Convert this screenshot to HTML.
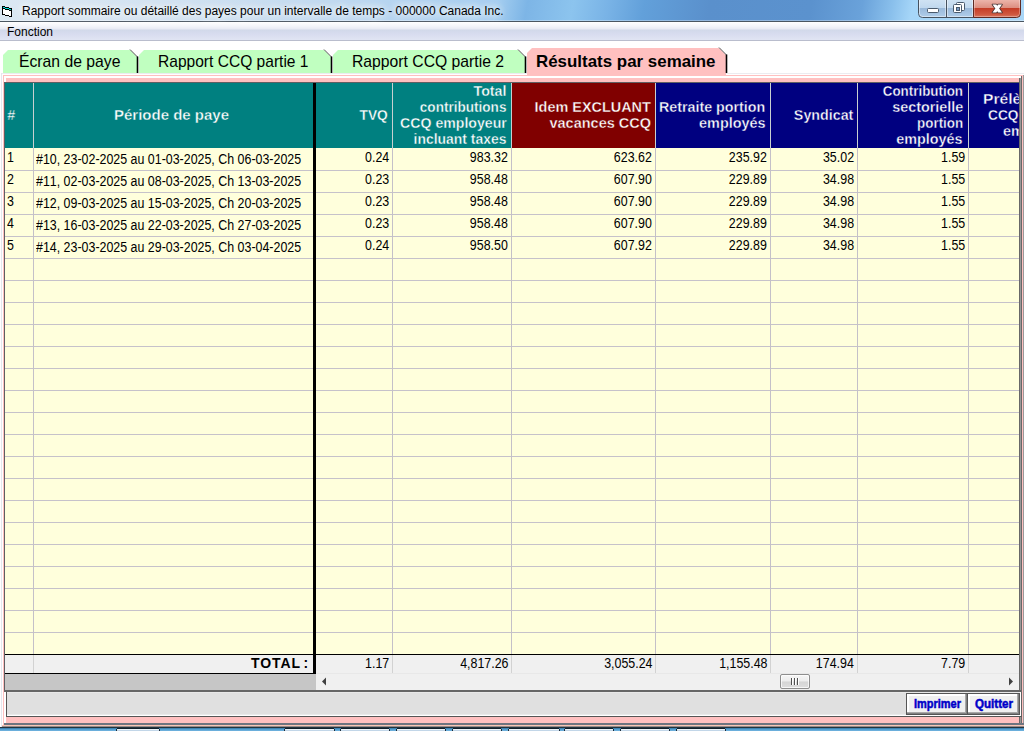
<!DOCTYPE html><html><head><meta charset='utf-8'><title>Rapport</title><style>
html,body{margin:0;padding:0}
body{width:1024px;height:731px;position:relative;overflow:hidden;background:#fff;font-family:"Liberation Sans",sans-serif;}
.a{position:absolute}
.t{position:absolute;white-space:nowrap;line-height:1}
#titlebar{left:0;top:0;width:1024px;height:21px;background:
 linear-gradient(100deg,#dbe8f3 0px,#d3e3f1 150px,#c4dbf0 300px,#b0d2f0 420px,#a4cef0 490px,#7db5e6 520px,#8cc4ee 565px,#79b3e6 600px,#62a0da 635px,#5a90cc 700px,#5b92ce 800px,#6aa2da 850px,#8ac0ec 880px,#a6d6f8 900px,#a9d6f7 1024px);}
#tline{left:0;top:21px;width:1024px;height:1px;background:#4b5661}
#thl{left:0;top:20px;width:1024px;height:1px;background:rgba(255,255,255,.35)}
#menubar{left:0;top:22px;width:1024px;height:18px;background:linear-gradient(to bottom,#ffffff 0px,#f4f5fa 4px,#e8eaf4 7px,#d2d9ea 8px,#d8dcef 12px,#e1e5f3 18px)}
#mline{left:0;top:40px;width:1024px;height:1px;background:#b9bdcd}
.tab{position:absolute;background:#c0ffc0;top:50px;height:23px}
.tabtxt{position:absolute;white-space:nowrap;font-size:17px;line-height:1;color:#000;transform-origin:0 0}
.hdr{position:absolute;top:82px;height:66px}
.ht{position:absolute;color:#fff;font-weight:bold;font-size:14px;line-height:16px;text-align:right;white-space:nowrap}
.vl{position:absolute;width:1px;background:#c4c0c8}
.hl{position:absolute;height:1px;background:#c6c2ca;left:4px;width:1015px}
.num{font-kerning:none;position:absolute;font-size:14px;line-height:1;white-space:nowrap;text-align:right;transform-origin:100% 0;color:#000}
.txt{font-kerning:none;position:absolute;font-size:14px;line-height:1;white-space:nowrap;transform-origin:0 0;color:#000}
.btn{position:absolute;top:693px;height:22px;box-sizing:border-box;background:#f0f0f0;border:1px solid #555;box-shadow:inset -1px -1px 0 #808080,inset -2px -2px 0 #a8a8a8,inset 2px 2px 0 #fff}
.btxt{position:absolute;font-weight:bold;font-size:12.5px;color:#0000c8;-webkit-text-stroke:.5px #0000c8;line-height:1;white-space:nowrap;transform-origin:0 0}
</style></head><body>
<div id='titlebar' class='a'></div><div id='thl' class='a'></div><div id='tline' class='a'></div>
<svg class='a' style='left:0;top:0' width='16' height='20' viewBox='0 0 16 20' shape-rendering='crispEdges'><rect x='2' y='6' width='3' height='1' fill='#000'/><rect x='2' y='7' width='1' height='1' fill='#000'/><rect x='3' y='7' width='2' height='1' fill='#00e0d8'/><rect x='5' y='7' width='4' height='1' fill='#000'/><rect x='2' y='8' width='3' height='1' fill='#000'/><rect x='5' y='8' width='4' height='1' fill='#00e0d8'/><rect x='9' y='8' width='3' height='1' fill='#000'/><rect x='2' y='9' width='1' height='1' fill='#000'/><rect x='3' y='9' width='2' height='1' fill='#fff'/><rect x='5' y='9' width='4' height='1' fill='#000'/><rect x='9' y='9' width='2' height='1' fill='#00e0d8'/><rect x='11' y='9' width='1' height='1' fill='#000'/><rect x='2' y='10' width='1' height='1' fill='#000'/><rect x='3' y='10' width='6' height='1' fill='#fff'/><rect x='9' y='10' width='3' height='1' fill='#000'/><rect x='2' y='11' width='1' height='1' fill='#000'/><rect x='3' y='11' width='8' height='1' fill='#fff'/><rect x='11' y='11' width='1' height='1' fill='#000'/><rect x='2' y='12' width='1' height='1' fill='#000'/><rect x='3' y='12' width='8' height='1' fill='#fff'/><rect x='11' y='12' width='1' height='1' fill='#000'/><rect x='2' y='13' width='1' height='1' fill='#000'/><rect x='3' y='13' width='8' height='1' fill='#fff'/><rect x='11' y='13' width='1' height='1' fill='#000'/><rect x='2' y='14' width='3' height='1' fill='#000'/><rect x='5' y='14' width='6' height='1' fill='#fff'/><rect x='11' y='14' width='1' height='1' fill='#000'/><rect x='5' y='15' width='4' height='1' fill='#000'/><rect x='9' y='15' width='2' height='1' fill='#fff'/><rect x='11' y='15' width='1' height='1' fill='#000'/><rect x='9' y='16' width='3' height='1' fill='#000'/></svg>
<div class='t' style='left:22px;top:5px;font-size:12px;color:#000;text-shadow:0 0 6px #fff,0 0 10px #fff,0 0 14px rgba(255,255,255,.8)'>Rapport sommaire ou détaillé des payes pour un intervalle de temps - 000000 Canada Inc.</div>
<svg class='a' style='left:918px;top:0' width='106' height='19' viewBox='0 0 106 19'>
<defs>
<linearGradient id='gb' x1='0' y1='0' x2='0' y2='18' gradientUnits='userSpaceOnUse'><stop offset='0' stop-color='#cfe2f3'/><stop offset='.44' stop-color='#c0d8ee'/><stop offset='.45' stop-color='#9ab9da'/><stop offset='1' stop-color='#b2cfea'/></linearGradient>
<linearGradient id='gr' x1='0' y1='0' x2='0' y2='18' gradientUnits='userSpaceOnUse'><stop offset='0' stop-color='#ecb4aa'/><stop offset='.44' stop-color='#dc8e80'/><stop offset='.45' stop-color='#c43c26'/><stop offset='.8' stop-color='#cf5840'/><stop offset='1' stop-color='#dc826c'/></linearGradient>
</defs>
<path d='M0.5 -1V13.5Q0.5 17.5 4.5 17.5H55.500V-1z' fill='url(#gb)' stroke='#46525f'/>
<path d='M55.500 -1V17.5H98.500Q102.500 17.5 102.500 13.5V-1z' fill='url(#gr)' stroke='#5e2a24'/>
<path d='M28.500 0V17' stroke='#46525f'/>
<path d='M1.500 0V13.500Q1.500 16.500 4.500 16.500H27.500V0M29.500 0V16.500H54.500V0' fill='none' stroke='rgba(255,255,255,.45)'/>
<path d='M56.500 0V16.500H98.500Q101.500 16.500 101.500 13.500V0' fill='none' stroke='rgba(255,255,255,.3)'/>
<rect x='9.500' y='8.500' width='11' height='4' rx='1' fill='#fff' stroke='#4a5a6c'/>
<rect x='38.500' y='2.500' width='8' height='8' rx='1' fill='#fff' stroke='#4a5a6c'/>
<rect x='35.500' y='4.500' width='8' height='8' rx='1' fill='#fff' stroke='#4a5a6c'/>
<rect x='38.500' y='7.500' width='3' height='3' fill='#7d9cc4' stroke='#4a5a6c'/>
<path d='M74.500 4.500H78.300L84 12.500H80.200zM80.200 4.500H84L78.300 12.500H74.500z' fill='#fff' stroke='#4a3434' stroke-width='1.600' stroke-linejoin='round'/>
<path d='M74.500 4.500H78.300L84 12.500H80.200zM80.200 4.500H84L78.300 12.500H74.500z' fill='#fff'/>
</svg>
<div id='menubar' class='a'></div><div id='mline' class='a'></div>
<div class='t' style='left:7px;top:26px;font-size:12px;color:#000'>Fonction</div>
<div class='a' style='left:2px;top:73px;width:1022px;height:1px;background:#ececf0'></div>
<div class='a' style='left:3px;top:75px;width:1020px;height:650px;background:#ffc0c0'></div>
<div class='a' style='left:4px;top:76px;width:1017px;height:2px;background:#fff'></div>
<div class='a' style='left:4px;top:76px;width:2px;height:647px;background:#fff'></div>
<div class='a' style='left:3px;top:50px;width:134px;height:23px;background:#c0ffc0;clip-path:polygon(0 5px,5px 0,127px 0,100% 7px,100% 100%,0 100%)'></div>
<svg class='a' style='left:128px;top:48px' width='12' height='25' viewBox='0 0 12 25'><path d='M2 1.500L9.500 9' stroke='#555' stroke-width='1' fill='none'/><path d='M9.500 8.500V25' stroke='#000' stroke-width='1.600'/></svg>
<div class='tabtxt' style='left:18.5px;top:53px;font-weight:normal;font-size:17px;transform:scaleX(0.9258)'>Écran de paye</div>
<div class='a' style='left:139px;top:50px;width:192px;height:23px;background:#c0ffc0;clip-path:polygon(0 5px,5px 0,185px 0,100% 7px,100% 100%,0 100%)'></div>
<svg class='a' style='left:322px;top:48px' width='12' height='25' viewBox='0 0 12 25'><path d='M2 1.500L9.500 9' stroke='#555' stroke-width='1' fill='none'/><path d='M9.500 8.500V25' stroke='#000' stroke-width='1.600'/></svg>
<div class='tabtxt' style='left:157.5px;top:53px;font-weight:normal;font-size:17px;transform:scaleX(0.9154)'>Rapport CCQ partie 1</div>
<div class='a' style='left:333px;top:50px;width:192px;height:23px;background:#c0ffc0;clip-path:polygon(0 5px,5px 0,185px 0,100% 7px,100% 100%,0 100%)'></div>
<svg class='a' style='left:516px;top:48px' width='12' height='25' viewBox='0 0 12 25'><path d='M2 1.500L9.500 9' stroke='#555' stroke-width='1' fill='none'/><path d='M9.500 8.500V25' stroke='#000' stroke-width='1.600'/></svg>
<div class='tabtxt' style='left:351.5px;top:53px;font-weight:normal;font-size:17px;transform:scaleX(0.9245)'>Rapport CCQ partie 2</div>
<div class='a' style='left:527px;top:48px;width:199px;height:28px;background:#ffc0c0;clip-path:polygon(0 5px,5px 0,192px 0,100% 7px,100% 100%,0 100%)'></div>
<svg class='a' style='left:717px;top:46px' width='12' height='27' viewBox='0 0 12 27'><path d='M2 1.500L9.500 9' stroke='#555' stroke-width='1' fill='none'/><path d='M9.500 8.500V27' stroke='#000' stroke-width='1.600'/></svg>
<div class='tabtxt' style='left:536px;top:53px;font-weight:bold;font-size:17px;transform:scaleX(0.9946)'>Résultats par semaine</div>
<div class='a' style='left:1px;top:73px;width:1px;height:655px;background:#e6e6ee'></div>
<div class='a' style='left:1019px;top:78px;width:1px;height:646px;background:#686868'></div>
<div class='a' style='left:1020px;top:78px;width:1px;height:646px;background:#9a9a9a'></div>
<div class='a' style='left:1021px;top:76px;width:1px;height:648px;background:#686868'></div>
<div class='a' style='left:1022px;top:75px;width:1px;height:650px;background:#ffc0c0'></div>
<div class='a' style='left:1023px;top:75px;width:1px;height:650px;background:#9a9a9a'></div>
<div class='a' style='left:4px;top:148px;width:1015px;height:506px;background:#ffffdc'></div>
<div class='hdr' style='left:4px;width:508px;background:#008080'></div>
<div class='hdr' style='left:512px;width:144px;background:#800000'></div>
<div class='hdr' style='left:656px;width:363px;background:#000080'></div>
<div class='a' style='left:4px;top:655px;width:1015px;height:18px;background:#f0f0f0'></div>
<div class='a' style='left:4px;top:674px;width:312px;height:16px;background:#c6c6c6'></div>
<div class='a' style='left:316px;top:673px;width:703px;height:17px;background:#f0f0f0'></div>
<div class='a' style='left:316px;top:673px;width:703px;height:1px;background:#e8e8e8'></div>
<div class='hl' style='top:170px'></div>
<div class='hl' style='top:192px'></div>
<div class='hl' style='top:214px'></div>
<div class='hl' style='top:236px'></div>
<div class='hl' style='top:258px'></div>
<div class='hl' style='top:280px'></div>
<div class='hl' style='top:302px'></div>
<div class='hl' style='top:324px'></div>
<div class='hl' style='top:346px'></div>
<div class='hl' style='top:368px'></div>
<div class='hl' style='top:390px'></div>
<div class='hl' style='top:412px'></div>
<div class='hl' style='top:434px'></div>
<div class='hl' style='top:456px'></div>
<div class='hl' style='top:478px'></div>
<div class='hl' style='top:500px'></div>
<div class='hl' style='top:522px'></div>
<div class='hl' style='top:544px'></div>
<div class='hl' style='top:566px'></div>
<div class='hl' style='top:588px'></div>
<div class='hl' style='top:610px'></div>
<div class='hl' style='top:632px'></div>
<div class='vl' style='left:33px;top:82px;height:66px;background:#c8d0d0'></div>
<div class='vl' style='left:33px;top:148px;height:506px'></div>
<div class='vl' style='left:33px;top:655px;height:18px;background:#d2d2d2'></div>
<div class='vl' style='left:392px;top:82px;height:66px;background:#c8d0d0'></div>
<div class='vl' style='left:392px;top:148px;height:506px'></div>
<div class='vl' style='left:392px;top:655px;height:18px;background:#d2d2d2'></div>
<div class='vl' style='left:511px;top:82px;height:66px;background:#c8d0d0'></div>
<div class='vl' style='left:511px;top:148px;height:506px'></div>
<div class='vl' style='left:511px;top:655px;height:18px;background:#d2d2d2'></div>
<div class='vl' style='left:655px;top:82px;height:66px;background:#c8d0d0'></div>
<div class='vl' style='left:655px;top:148px;height:506px'></div>
<div class='vl' style='left:655px;top:655px;height:18px;background:#d2d2d2'></div>
<div class='vl' style='left:770px;top:82px;height:66px;background:#c8d0d0'></div>
<div class='vl' style='left:770px;top:148px;height:506px'></div>
<div class='vl' style='left:770px;top:655px;height:18px;background:#d2d2d2'></div>
<div class='vl' style='left:857px;top:82px;height:66px;background:#c8d0d0'></div>
<div class='vl' style='left:857px;top:148px;height:506px'></div>
<div class='vl' style='left:857px;top:655px;height:18px;background:#d2d2d2'></div>
<div class='vl' style='left:968px;top:82px;height:66px;background:#c8d0d0'></div>
<div class='vl' style='left:968px;top:148px;height:506px'></div>
<div class='vl' style='left:968px;top:655px;height:18px;background:#d2d2d2'></div>
<div class='a' style='left:4px;top:654px;width:1015px;height:1px;background:#000'></div>
<div class='a' style='left:4px;top:673px;width:312px;height:1px;background:#000'></div>
<div class='a' style='left:313px;top:82px;width:3px;height:592px;background:#000'></div>
<div class='a' style='left:4px;top:82px;width:1015px;height:1px;background:#5f5f63'></div>
<div class='a' style='left:4px;top:82px;width:1px;height:608px;background:#5f5f63'></div>
<div class='ht' style='left:7px;transform-origin:0 0;top:107px;font-size:14px;transform:scaleX(1.0261);-webkit-text-stroke:.35px #008080;font-style:italic;'>#</div>
<div class='ht' style='left:114.3px;transform-origin:0 0;top:107px;font-size:14px;transform:scaleX(1.0709);-webkit-text-stroke:.35px #008080;'>Période de paye</div>
<div class='ht' style='right:636.4px;transform-origin:100% 0;top:107px;font-size:14px;transform:scaleX(0.9833);-webkit-text-stroke:.35px #008080;'>TVQ</div>
<div class='ht' style='right:517.6px;transform-origin:100% 0;top:83px;font-size:14px;transform:scaleX(1.0152);-webkit-text-stroke:.35px #008080;'>Total</div>
<div class='ht' style='right:517.6px;transform-origin:100% 0;top:99px;font-size:14px;transform:scaleX(0.9683);-webkit-text-stroke:.35px #008080;'>contributions</div>
<div class='ht' style='right:517.6px;transform-origin:100% 0;top:115px;font-size:14px;transform:scaleX(1.0084);-webkit-text-stroke:.35px #008080;'>CCQ employeur</div>
<div class='ht' style='right:517.6px;transform-origin:100% 0;top:131px;font-size:14px;transform:scaleX(0.9938);-webkit-text-stroke:.35px #008080;'>incluant taxes</div>
<div class='ht' style='right:373.4px;transform-origin:100% 0;top:99px;font-size:14px;transform:scaleX(1.0302);-webkit-text-stroke:.35px #800000;'>Idem EXCLUANT</div>
<div class='ht' style='right:373.4px;transform-origin:100% 0;top:115px;font-size:14px;transform:scaleX(1.0361);-webkit-text-stroke:.35px #800000;'>vacances CCQ</div>
<div class='ht' style='right:258.5px;transform-origin:100% 0;top:99px;font-size:14px;transform:scaleX(1.0198);-webkit-text-stroke:.35px #000080;'>Retraite portion</div>
<div class='ht' style='right:258.5px;transform-origin:100% 0;top:115px;font-size:14px;transform:scaleX(1.0295);-webkit-text-stroke:.35px #000080;'>employés</div>
<div class='ht' style='right:170.79999999999995px;transform-origin:100% 0;top:107px;font-size:14px;transform:scaleX(1.0195);-webkit-text-stroke:.35px #000080;'>Syndicat</div>
<div class='ht' style='right:61px;transform-origin:100% 0;top:83px;font-size:14px;transform:scaleX(0.9549);-webkit-text-stroke:.35px #000080;'>Contribution</div>
<div class='ht' style='right:61px;transform-origin:100% 0;top:99px;font-size:14px;transform:scaleX(1.0250);-webkit-text-stroke:.35px #000080;'>sectorielle</div>
<div class='ht' style='right:61px;transform-origin:100% 0;top:115px;font-size:14px;transform:scaleX(0.9581);-webkit-text-stroke:.35px #000080;'>portion</div>
<div class='ht' style='right:61px;transform-origin:100% 0;top:131px;font-size:14px;transform:scaleX(1.0264);-webkit-text-stroke:.35px #000080;'>employés</div>
<div class='a' style='left:969px;top:82px;width:50px;height:66px;overflow:hidden'>
<div class='ht' style='left:14.399999999999977px;top:9px;transform-origin:0 0;transform:scaleX(1.1167);-webkit-text-stroke:.35px #000080'>Prélèvement</div>
<div class='ht' style='left:18.600000000000023px;top:25px;transform-origin:0 0;transform:scaleX(0.9793);-webkit-text-stroke:.35px #000080'>CCQ portion</div>
<div class='ht' style='left:34px;top:41px;transform-origin:0 0;transform:scaleX(1.0264);-webkit-text-stroke:.35px #000080'>employés</div>
</div>
<div class='txt' style='left:7px;top:150px;transform:scaleX(0.887)'>1</div>
<div class='txt' style='left:36px;top:152px;transform:scaleX(0.887)'>#10, 23-02-2025 au 01-03-2025, Ch 06-03-2025</div>
<div class='num' style='right:635px;top:150px;transform:scaleX(0.887)'>0.24</div>
<div class='num' style='right:516px;top:150px;transform:scaleX(0.887)'>983.32</div>
<div class='num' style='right:372px;top:150px;transform:scaleX(0.887)'>623.62</div>
<div class='num' style='right:257px;top:150px;transform:scaleX(0.887)'>235.92</div>
<div class='num' style='right:170px;top:150px;transform:scaleX(0.887)'>35.02</div>
<div class='num' style='right:59px;top:150px;transform:scaleX(0.887)'>1.59</div>
<div class='txt' style='left:7px;top:172px;transform:scaleX(0.887)'>2</div>
<div class='txt' style='left:36px;top:174px;transform:scaleX(0.887)'>#11, 02-03-2025 au 08-03-2025, Ch 13-03-2025</div>
<div class='num' style='right:635px;top:172px;transform:scaleX(0.887)'>0.23</div>
<div class='num' style='right:516px;top:172px;transform:scaleX(0.887)'>958.48</div>
<div class='num' style='right:372px;top:172px;transform:scaleX(0.887)'>607.90</div>
<div class='num' style='right:257px;top:172px;transform:scaleX(0.887)'>229.89</div>
<div class='num' style='right:170px;top:172px;transform:scaleX(0.887)'>34.98</div>
<div class='num' style='right:59px;top:172px;transform:scaleX(0.887)'>1.55</div>
<div class='txt' style='left:7px;top:194px;transform:scaleX(0.887)'>3</div>
<div class='txt' style='left:36px;top:196px;transform:scaleX(0.887)'>#12, 09-03-2025 au 15-03-2025, Ch 20-03-2025</div>
<div class='num' style='right:635px;top:194px;transform:scaleX(0.887)'>0.23</div>
<div class='num' style='right:516px;top:194px;transform:scaleX(0.887)'>958.48</div>
<div class='num' style='right:372px;top:194px;transform:scaleX(0.887)'>607.90</div>
<div class='num' style='right:257px;top:194px;transform:scaleX(0.887)'>229.89</div>
<div class='num' style='right:170px;top:194px;transform:scaleX(0.887)'>34.98</div>
<div class='num' style='right:59px;top:194px;transform:scaleX(0.887)'>1.55</div>
<div class='txt' style='left:7px;top:216px;transform:scaleX(0.887)'>4</div>
<div class='txt' style='left:36px;top:218px;transform:scaleX(0.887)'>#13, 16-03-2025 au 22-03-2025, Ch 27-03-2025</div>
<div class='num' style='right:635px;top:216px;transform:scaleX(0.887)'>0.23</div>
<div class='num' style='right:516px;top:216px;transform:scaleX(0.887)'>958.48</div>
<div class='num' style='right:372px;top:216px;transform:scaleX(0.887)'>607.90</div>
<div class='num' style='right:257px;top:216px;transform:scaleX(0.887)'>229.89</div>
<div class='num' style='right:170px;top:216px;transform:scaleX(0.887)'>34.98</div>
<div class='num' style='right:59px;top:216px;transform:scaleX(0.887)'>1.55</div>
<div class='txt' style='left:7px;top:238px;transform:scaleX(0.887)'>5</div>
<div class='txt' style='left:36px;top:240px;transform:scaleX(0.887)'>#14, 23-03-2025 au 29-03-2025, Ch 03-04-2025</div>
<div class='num' style='right:635px;top:238px;transform:scaleX(0.887)'>0.24</div>
<div class='num' style='right:516px;top:238px;transform:scaleX(0.887)'>958.50</div>
<div class='num' style='right:372px;top:238px;transform:scaleX(0.887)'>607.92</div>
<div class='num' style='right:257px;top:238px;transform:scaleX(0.887)'>229.89</div>
<div class='num' style='right:170px;top:238px;transform:scaleX(0.887)'>34.98</div>
<div class='num' style='right:59px;top:238px;transform:scaleX(0.887)'>1.55</div>
<div class='t' style='right:715px;top:656px;font-weight:bold;font-size:14px;letter-spacing:.9px;word-spacing:-2px'>TOTAL :</div>
<div class='num' style='right:635px;top:656px;transform:scaleX(0.887)'>1.17</div>
<div class='num' style='right:516px;top:656px;transform:scaleX(0.887)'>4,817.26</div>
<div class='num' style='right:372px;top:656px;transform:scaleX(0.887)'>3,055.24</div>
<div class='num' style='right:257px;top:656px;transform:scaleX(0.887)'>1,155.48</div>
<div class='num' style='right:170px;top:656px;transform:scaleX(0.887)'>174.94</div>
<div class='num' style='right:59px;top:656px;transform:scaleX(0.887)'>7.79</div>
<svg class='a' style='left:321px;top:677px' width='6' height='9' viewBox='0 0 6 9'><path d='M5 0.500V8.500L1 4.500z' fill='#404040'/></svg>
<svg class='a' style='left:1008px;top:677px' width='6' height='9' viewBox='0 0 6 9'><path d='M1 0.500V8.500L5 4.500z' fill='#404040'/></svg>
<div class='a' style='left:780px;top:674px;width:30px;height:15px;box-sizing:border-box;border:1px solid #8e8e8e;border-radius:2px;background:linear-gradient(to bottom,#f6f6f6 0,#ececec 48%,#d4d4d4 52%,#dedede 100%);box-shadow:inset 0 0 0 1px rgba(255,255,255,.7)'></div>
<div class='a' style='left:791px;top:678px;width:2px;height:7px;background:linear-gradient(to right,#505050 50%,#fff 50%)'></div>
<div class='a' style='left:794px;top:678px;width:2px;height:7px;background:linear-gradient(to right,#505050 50%,#fff 50%)'></div>
<div class='a' style='left:797px;top:678px;width:2px;height:7px;background:linear-gradient(to right,#505050 50%,#fff 50%)'></div>
<div class='a' style='left:4px;top:690px;width:1017px;height:2px;background:#666'></div>
<div class='a' style='left:6px;top:692px;width:1016px;height:25px;background:#e0e0e0;box-sizing:border-box;border-left:1px solid #555;border-bottom:1px solid #555;border-right:1px solid #606060'></div>
<div class='a' style='left:7px;top:692px;width:1014px;height:1px;background:#e8e8e8'></div>
<div class='a' style='left:7px;top:714px;width:1013px;height:1px;background:#e8eaea'></div>
<div class='a' style='left:7px;top:715px;width:1014px;height:1px;background:#fff'></div>
<div class='a' style='left:1020px;top:692px;width:1px;height:24px;background:#fff'></div>
<div class='btn' style='left:906px;width:62px'></div><div class='btn' style='left:967px;width:53px'></div>
<div class='btxt' style='left:913.5px;top:697.5px;transform:scaleX(0.8785)'>Imprimer</div>
<div class='btxt' style='left:974.5px;top:697.5px;transform:scaleX(0.9272)'>Quitter</div>
<div class='a' style='left:4px;top:723px;width:1020px;height:2px;background:#6e7480'></div>
<div class='a' style='left:2px;top:725px;width:1022px;height:1px;background:#f8c4b4'></div>
<div class='a' style='left:2px;top:726px;width:1022px;height:1px;background:#948c8c'></div>
<div class='a' style='left:0;top:727px;width:1024px;height:4px;background:linear-gradient(to bottom,#26343f 0,#26343f 25%,#3e84b4 25%,#3e84b4 50%,#58a0d0 50%,#58a0d0 75%,#6aaedb 75%)'></div>
<div class='a' style='left:117px;top:728px;width:42px;height:1px;background:#10202c'></div>
<div class='a' style='left:116px;top:729px;width:44px;height:2px;background:linear-gradient(to bottom,#eef4f9 50%,#c2d6e8 50%);border-left:1px solid #1c2c3a;border-right:1px solid #1c2c3a;box-sizing:border-box'></div>
<div class='a' style='left:285px;top:728px;width:49px;height:1px;background:#10202c'></div>
<div class='a' style='left:284px;top:729px;width:51px;height:2px;background:linear-gradient(to bottom,#eef4f9 50%,#c2d6e8 50%);border-left:1px solid #1c2c3a;border-right:1px solid #1c2c3a;box-sizing:border-box'></div>
<div class='a' style='left:341px;top:728px;width:48px;height:1px;background:#10202c'></div>
<div class='a' style='left:340px;top:729px;width:50px;height:2px;background:linear-gradient(to bottom,#eef4f9 50%,#c2d6e8 50%);border-left:1px solid #1c2c3a;border-right:1px solid #1c2c3a;box-sizing:border-box'></div>
<div class='a' style='left:397px;top:728px;width:48px;height:1px;background:#10202c'></div>
<div class='a' style='left:396px;top:729px;width:50px;height:2px;background:linear-gradient(to bottom,#eef4f9 50%,#c2d6e8 50%);border-left:1px solid #1c2c3a;border-right:1px solid #1c2c3a;box-sizing:border-box'></div>
<div class='a' style='left:453px;top:728px;width:48px;height:1px;background:#10202c'></div>
<div class='a' style='left:452px;top:729px;width:50px;height:2px;background:linear-gradient(to bottom,#eef4f9 50%,#c2d6e8 50%);border-left:1px solid #1c2c3a;border-right:1px solid #1c2c3a;box-sizing:border-box'></div>
<div class='a' style='left:509px;top:728px;width:50px;height:1px;background:#10202c'></div>
<div class='a' style='left:508px;top:729px;width:52px;height:2px;background:linear-gradient(to bottom,#eef4f9 50%,#c2d6e8 50%);border-left:1px solid #1c2c3a;border-right:1px solid #1c2c3a;box-sizing:border-box'></div>
<div class='a' style='left:565px;top:728px;width:48px;height:1px;background:#10202c'></div>
<div class='a' style='left:564px;top:729px;width:50px;height:2px;background:linear-gradient(to bottom,#eef4f9 50%,#c2d6e8 50%);border-left:1px solid #1c2c3a;border-right:1px solid #1c2c3a;box-sizing:border-box'></div>
<div class='a' style='left:621px;top:728px;width:48px;height:1px;background:#10202c'></div>
<div class='a' style='left:620px;top:729px;width:50px;height:2px;background:linear-gradient(to bottom,#eef4f9 50%,#c2d6e8 50%);border-left:1px solid #1c2c3a;border-right:1px solid #1c2c3a;box-sizing:border-box'></div>
<div class='a' style='left:677px;top:728px;width:48px;height:1px;background:#10202c'></div>
<div class='a' style='left:676px;top:729px;width:50px;height:2px;background:linear-gradient(to bottom,#eef4f9 50%,#c2d6e8 50%);border-left:1px solid #1c2c3a;border-right:1px solid #1c2c3a;box-sizing:border-box'></div>
</body></html>
